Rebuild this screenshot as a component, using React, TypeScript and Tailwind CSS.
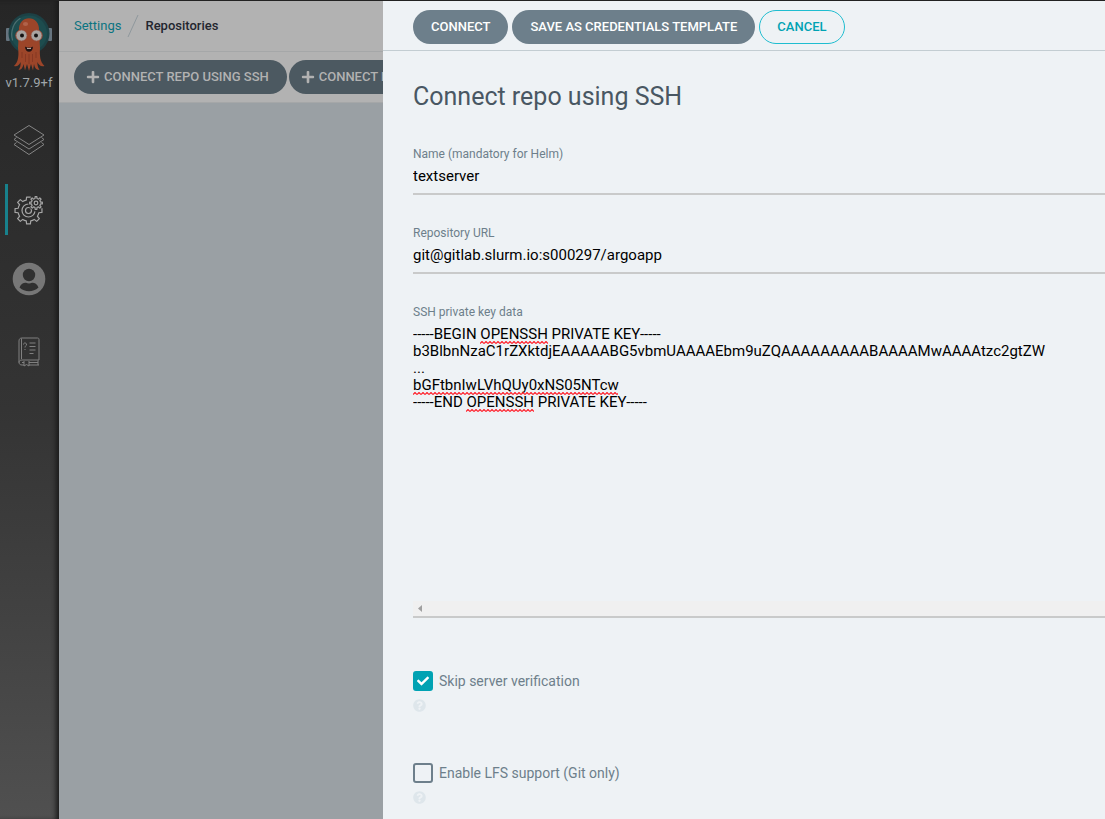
import { useState } from "react";
import type { ReactNode } from "react";
import { FaCheck, FaPlus, FaQuestionCircle } from "react-icons/fa";

const KEY_DATA = [
  "-----BEGIN OPENSSH PRIVATE KEY-----",
  "b3BlbnNzaC1rZXktdjEAAAAABG5vbmUAAAAEbm9uZQAAAAAAAAABAAAAMwAAAAtzc2gtZW",
  "...",
  "bGFtbnIwLVhQUy0xNS05NTcw",
  "-----END OPENSSH PRIVATE KEY-----",
].join("\n");

function Logo() {
  return (
    <svg viewBox="0 0 48 62" className="h-[62px] w-12" aria-hidden="true">
      <rect x="1" y="17" width="4" height="13" rx="1" fill="#66747f" />
      <rect x="43" y="17" width="4" height="13" rx="1" fill="#66747f" />
      <circle cx="24" cy="22.5" r="20.500" fill="#1c4145" />
      <circle cx="24" cy="22.5" r="18" fill="#1d4c4e" />
      <path d="M7.500 29C5 20 9 11 15 7.500" fill="none" stroke="#4c6f70" strokeWidth="1.200" strokeLinecap="round" />
      <path
        d="M14 20C12.500 3 35.500 3 34 20L35 37C34.500 44 35 51 39.500 55C36 56 33.500 54 32.500 51C32 55 34 58 34.500 59C31 59 29.500 56 29 53L28 59.500L26 53L24 60L22 53L20 59.500L18.500 53C18 56 16.500 59 13.500 59C15 57 16 54 15.500 51C14.500 54 12 56 9 55C13.500 51 14 44 13 37Z"
        fill="#9c4529"
      />
      <path d="M17 41V47M20.500 43V51M24 43V53M27.500 43V51M31 41V47" stroke="#823522" strokeWidth="0.800" />
      <ellipse cx="20.500" cy="13" rx="2.600" ry="2" fill="#b0624a" />
      <circle cx="16.500" cy="24.500" r="5.700" fill="#a8a4a1" stroke="#974430" strokeWidth="1" />
      <circle cx="31.500" cy="24.500" r="5.700" fill="#a8a4a1" stroke="#974430" strokeWidth="1" />
      <circle cx="17" cy="24.500" r="2" fill="#151313" />
      <circle cx="31" cy="24.500" r="2" fill="#151313" />
      <path d="M20 35.500C22 37 26 37 28 35.500C28 42.500 20 42.500 20 35.500Z" fill="#211414" />
      <path d="M22 36.500C23 37.200 25 37.200 26 36.500V38H22Z" fill="#b3a5a0" />
    </svg>
  );
}

function LayersIcon() {
  return (
    <svg viewBox="0 0 32 32" className="size-8" fill="none" stroke="#858585" strokeWidth="1" strokeLinejoin="round" aria-hidden="true">
      <path d="M16 1.500L31 11L16 20.500L1 11Z" />
      <path d="M3.500 13.500L1 15.500L16 25L31 15.500L28.500 13.500" />
      <path d="M3.500 18.500L1 20.500L16 30.500L31 20.500L28.500 18.500" />
    </svg>
  );
}

function gearPath(cx: number, cy: number, inner: number, outer: number, teeth: number, turn: number) {
  const step = (Math.PI * 2) / teeth;
  const at = (r: number, a: number) => `${(cx + r * Math.cos(a)).toFixed(2)} ${(cy + r * Math.sin(a)).toFixed(2)}`;
  let d = "";
  for (let i = 0; i < teeth; i++) {
    const a = i * step + turn;
    d += `${i ? "L" : "M"}${at(inner, a - step * 0.27)}L${at(outer, a - step * 0.18)}L${at(outer, a + step * 0.18)}L${at(inner, a + step * 0.27)}`;
    d += `A${inner} ${inner} 0 0 1 ${at(inner, a + step * 0.73)}`;
  }
  return d + "Z";
}

function GearsIcon() {
  return (
    <svg viewBox="0 0 30 30" className="size-[30px]" fill="none" stroke="#a6a6a6" strokeWidth="1.2" strokeLinejoin="round" aria-hidden="true">
      <path d={gearPath(14.5, 15.5, 10.6, 13.6, 8, 0)} />
      <circle cx="14.500" cy="15.500" r="6.500" strokeDasharray="33 8" strokeDashoffset="-1" />
      <circle cx="14.500" cy="15.500" r="3" />
      <circle cx="22" cy="8" r="7.800" fill="#2c2c2c" stroke="none" />
      <path d={gearPath(22, 8, 4.6, 6.4, 8, 0)} />
      <circle cx="22" cy="8" r="1.800" />
    </svg>
  );
}

function UserIcon() {
  return (
    <svg viewBox="0 0 34 36" className="h-9 w-[34px]" aria-hidden="true">
      <circle cx="17" cy="17" r="16.300" fill="#777" />
      <circle cx="17" cy="13" r="6.200" fill="#303030" />
      <path d="M7.500 25.500C9 21.500 12 20.500 14 20.800C16 21.800 18 21.800 20 20.800C22 20.500 25 21.500 26.500 25.500C21 30.500 13 30.500 7.500 25.500Z" fill="#303030" />
    </svg>
  );
}

function BookIcon() {
  return (
    <svg viewBox="0 -4 22 34" className="h-[34px] w-[22px]" fill="none" stroke="#808080" strokeWidth="1" strokeLinejoin="round" aria-hidden="true">
      <path d="M21 23V2.500C21 1.500 20.500 1 19.500 1H4C2 1 1 2 1 4V25C1 27 2 28 4 28H6M21 23H4C2 23 1 24 1 25.500M20 23.500V28M11 28H21M4 25.500H6M11 25.500H20M3.500 1.500V22" />
      <path d="M6 24V29L8.500 27.500L11 29V24" />
      <path d="M5.500 7.500C5.500 5.200 9 5.500 8.500 8C8.200 9 7 9 7 10.500M7 12V13M11.500 6H17.500M11.500 9.500H17.500M11.500 13H17.500M11.500 16.500H15.500" />
    </svg>
  );
}

function NavItem({ label, active, children }: { label: string; active?: boolean; children: ReactNode }) {
  return (
    <a
      href="#"
      aria-label={label}
      className={
        active
          ? "flex h-[51px] w-full items-center justify-center border-l-[3px] border-[#18818c] pr-[9px]"
          : "flex h-[51px] w-full items-center justify-center border-l-[3px] border-transparent pr-[9px]"
      }
    >
      {children}
    </a>
  );
}

function RepoButton({ children }: { children: ReactNode }) {
  return (
    <button className="flex h-[34px] shrink-0 items-center gap-1 rounded-full bg-[#4c5961] pr-[18px] pl-3 text-[13px] font-medium whitespace-nowrap text-[#b2b2b2]">
      <FaPlus className="size-[14px]" />
      {children}
    </button>
  );
}

function TextField({ id, label, value }: { id: string; label: string; value: string }) {
  return (
    <div className="mb-[30px]">
      <label htmlFor={id} className="block text-xs leading-4 text-[#6d7f8b]">
        {label}
      </label>
      <input
        id={id}
        defaultValue={value}
        className="block h-[33px] w-full border-b-2 border-[#c9caca] bg-transparent pb-1 text-[15px] text-black outline-none"
      />
    </div>
  );
}

function Squiggle({ className }: { className: string }) {
  return (
    <svg className={className} height="3" aria-hidden="true">
      <defs>
        <pattern id="wave" width="4" height="3" patternUnits="userSpaceOnUse">
          <path d="M0 2.500L2 0.500L4 2.500" fill="none" stroke="#ff1f2a" strokeWidth="1.200" />
        </pattern>
      </defs>
      <rect width="100%" height="3" fill="url(#wave)" />
    </svg>
  );
}

function CheckField({ id, label, initial }: { id: string; label: string; initial: boolean }) {
  const [checked, setChecked] = useState(initial);
  return (
    <div className="mb-[51px]">
      <div className="flex h-5 items-center gap-1.5">
        <span className="relative flex size-5">
          <input
            id={id}
            type="checkbox"
            checked={checked}
            onChange={(e) => setChecked(e.target.checked)}
            className="size-5 appearance-none rounded-[3px] border-2 border-[#6d7f8b] checked:border-[#00a2b3] checked:bg-[#00a2b3]"
          />
          {checked && <FaCheck className="pointer-events-none absolute top-1 left-1 size-3 text-white" />}
        </span>
        <label htmlFor={id} className="text-sm leading-5 text-[#6d7f8b]">
          {label}
        </label>
      </div>
      <FaQuestionCircle className="mt-2 size-[13px] text-[#dee6eb]" />
    </div>
  );
}

export default function App() {
  return (
    <div className="relative flex min-h-screen overflow-hidden border-t border-[#222] bg-[#9aa0a4] font-['Roboto',sans-serif]">
      <nav className="flex w-[59px] shrink-0 flex-col items-center bg-linear-to-b from-[#262626] via-[#343434] to-[#505050] pt-2.5 pl-[5px] shadow-[inset_-5px_0_5px_-2px_#1b1b1b]">
        <div className="flex w-full flex-col items-center pr-1.5">
          <Logo />
          <span className="text-[13px] leading-5 whitespace-nowrap text-[#a0a6aa]">v1.7.9+f</span>
        </div>
        <div className="mt-[21px] flex w-full flex-col gap-[19px]">
          <NavItem label="Applications"><LayersIcon /></NavItem>
          <NavItem label="Settings" active><GearsIcon /></NavItem>
          <NavItem label="User"><UserIcon /></NavItem>
          <NavItem label="Documentation"><BookIcon /></NavItem>
        </div>
      </nav>

      <main className="min-w-0 flex-1">
        <header className="flex h-[51px] items-center border-b border-[#a5a7a8] bg-[#b2b2b2] pl-[15px] text-[13px]">
          <a href="#" className="text-[#0b7481]">Settings</a>
          <svg viewBox="0 0 12 24" className="mx-1.5 h-6 w-3" aria-hidden="true">
            <path d="M1 23L11 1" stroke="#8f989d" strokeWidth="1" />
          </svg>
          <span className="font-medium text-[#23262f]">Repositories</span>
        </header>
        <div className="flex h-[51px] items-center gap-0.5 overflow-hidden border-b border-[#a5a7a8] bg-[#b2b2b2] pl-[15px]">
          <RepoButton>CONNECT REPO USING SSH</RepoButton>
          <RepoButton>CONNECT REPO USING HTTPS</RepoButton>
        </div>
      </main>

      <section role="dialog" aria-labelledby="panel-title" className="absolute inset-y-0 right-0 left-[383px] overflow-hidden bg-[#eef2f5]">
        <div className="flex h-[50px] items-center gap-1 border-b border-[#c3cdd2] pt-0.5 pl-[30px] text-[13px] font-medium">
          <button className="h-[34px] rounded-full bg-[#6d7f8b] px-[18px] text-white">CONNECT</button>
          <button className="h-[34px] rounded-full bg-[#6d7f8b] px-[18px] text-white">SAVE AS CREDENTIALS TEMPLATE</button>
          <button className="h-[34px] rounded-full border border-[#1fbdd0] px-[17px] text-[#00a2b3]">CANCEL</button>
        </div>
        <form className="pt-7 pl-[30px]">
          <h1 id="panel-title" className="mb-[31px] text-[25px] leading-9 text-[#495763]">Connect repo using SSH</h1>
          <TextField id="name" label="Name (mandatory for Helm)" value="textserver" />
          <TextField id="url" label="Repository URL" value="git@gitlab.slurm.io:s000297/argoapp" />
          <div className="mb-[53px]">
            <label htmlFor="key" className="mb-1.5 block text-xs leading-4 text-[#6d7f8b]">SSH private key data</label>
            <div className="relative border-b-2 border-[#c9caca]">
              <textarea
                id="key"
                wrap="off"
                spellCheck={false}
                defaultValue={KEY_DATA}
                className="block h-[275px] w-full resize-none overflow-hidden bg-transparent text-[15px] leading-[17px] text-black outline-none"
              />
              <Squiggle className="pointer-events-none absolute top-[15px] left-[67px] w-[68px]" />
              <Squiggle className="pointer-events-none absolute top-[66px] left-0 w-[205px]" />
              <Squiggle className="pointer-events-none absolute top-[83px] left-[53px] w-[68px]" />
              <div className="flex h-[15px] items-center bg-[#f0f0f0] pl-[5px]">
                <svg viewBox="0 0 4 7" className="h-[7px] w-1" aria-hidden="true">
                  <path d="M4 0V7L0 3.500Z" fill="#a0a0a0" />
                </svg>
              </div>
            </div>
          </div>
          <CheckField id="skip" label="Skip server verification" initial={true} />
          <CheckField id="lfs" label="Enable LFS support (Git only)" initial={false} />
        </form>
      </section>
    </div>
  );
}
